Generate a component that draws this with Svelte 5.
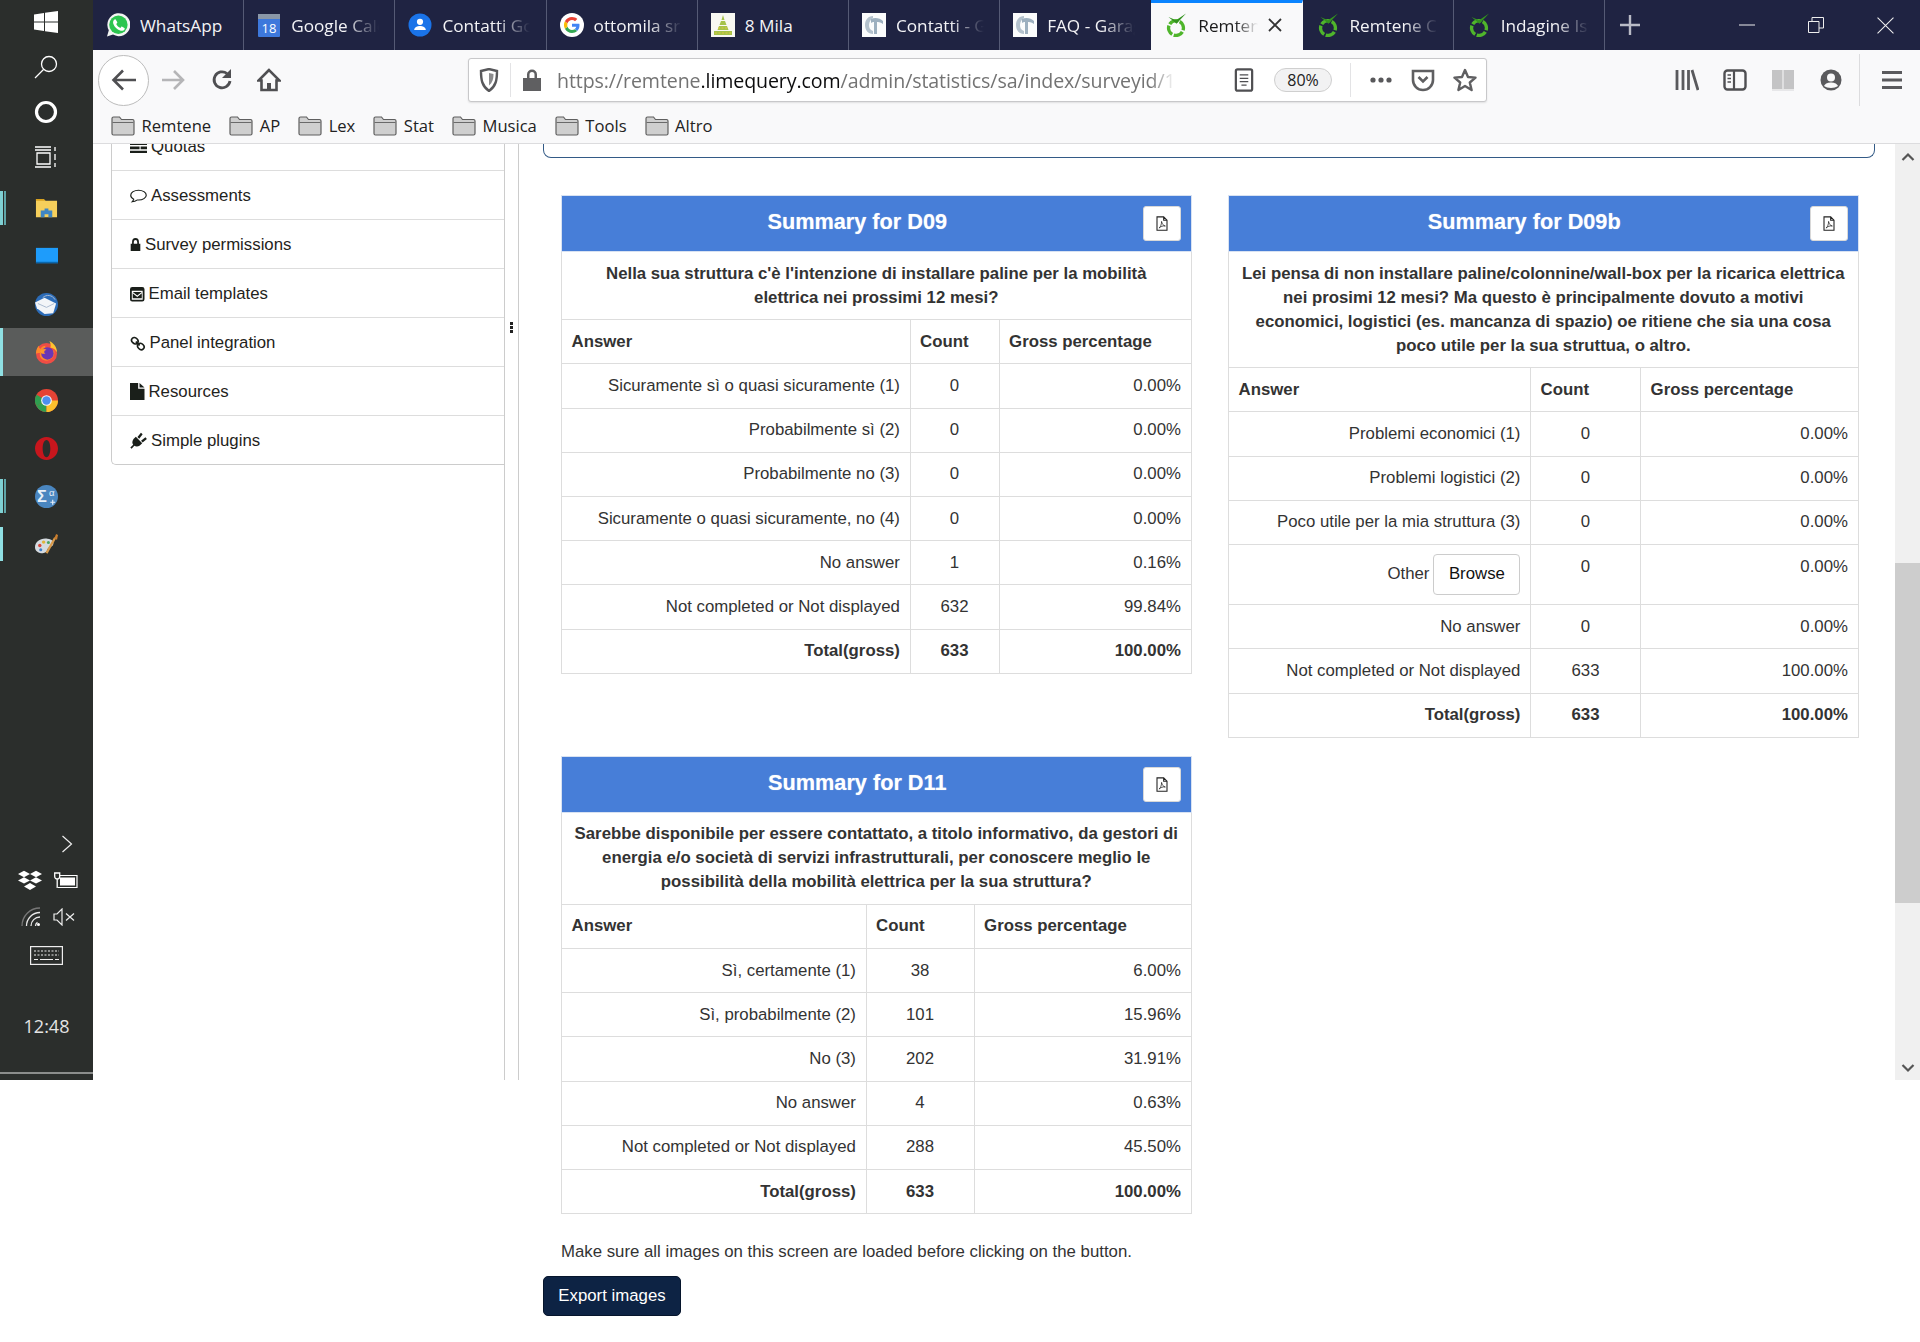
<script>
  const tabs = [
    { icon: 'wa', label: 'WhatsApp', fit: true },
    { icon: 'cal', label: 'Google Calendar' },
    { icon: 'contact', label: 'Contatti Google' },
    { icon: 'g', label: 'ottomila srl - Cerca' },
    { icon: 'mila', label: '8 Mila', fit: true },
    { icon: 'gara', label: 'Contatti - Garage' },
    { icon: 'gara', label: 'FAQ - Garage Italia' },
    { icon: 'lime', label: 'Remtene Statistics', active: true },
    { icon: 'lime', label: 'Remtene Consulting' },
    { icon: 'lime', label: 'Indagine Istat 2020' }
  ];
  const bookmarks = ['Remtene', 'AP', 'Lex', 'Stat', 'Musica', 'Tools', 'Altro'];
  const sideItems = [
    { icon: 'quota', label: 'Quotas' },
    { icon: 'bubble', label: 'Assessments' },
    { icon: 'lock', label: 'Survey permissions' },
    { icon: 'mail', label: 'Email templates' },
    { icon: 'chain', label: 'Panel integration' },
    { icon: 'file', label: 'Resources' },
    { icon: 'plug', label: 'Simple plugins' }
  ];
  const apps = [
    { icon: 'explorer', mark: 'double' },
    { icon: 'desktop' },
    { icon: 'bird' },
    { icon: 'fox', mark: 'active' },
    { icon: 'chrome' },
    { icon: 'opera' },
    { icon: 'sigma', mark: 'double' },
    { icon: 'palette', mark: 'single' }
  ];
  const summaries = [
    {
      title: 'Summary for D09',
      cols: [348.5, 89, 192],
      question: "Nella sua struttura c'è l'intenzione di installare paline per la mobilità elettrica nei prossimi 12 mesi?",
      rows: [
        ['Sicuramente sì o quasi sicuramente (1)', '0', '0.00%'],
        ['Probabilmente sì (2)', '0', '0.00%'],
        ['Probabilmente no (3)', '0', '0.00%'],
        ['Sicuramente o quasi sicuramente, no (4)', '0', '0.00%'],
        ['No answer', '1', '0.16%'],
        ['Not completed or Not displayed', '632', '99.84%']
      ],
      total: ['Total(gross)', '633', '100.00%']
    },
    {
      title: 'Summary for D09b',
      cols: [302, 110, 217.5],
      question: 'Lei pensa di non installare paline/colonnine/wall-box per la ricarica elettrica nei prosimi 12 mesi? Ma questo è principalmente dovuto a motivi economici, logistici (es. mancanza di spazio) oe ritiene che sia una cosa poco utile per la sua struttua, o altro.',
      rows: [
        ['Problemi economici (1)', '0', '0.00%'],
        ['Problemi logistici (2)', '0', '0.00%'],
        ['Poco utile per la mia struttura (3)', '0', '0.00%'],
        ['Other', '0', '0.00%', true],
        ['No answer', '0', '0.00%'],
        ['Not completed or Not displayed', '633', '100.00%']
      ],
      total: ['Total(gross)', '633', '100.00%']
    },
    {
      title: 'Summary for D11',
      cols: [304.5, 108, 217],
      question: 'Sarebbe disponibile per essere contattato, a titolo informativo, da gestori di energia e/o società di servizi infrastrutturali, per conoscere meglio le possibilità della mobilità elettrica per la sua struttura?',
      rows: [
        ['Sì, certamente (1)', '38', '6.00%'],
        ['Sì, probabilmente (2)', '101', '15.96%'],
        ['No (3)', '202', '31.91%'],
        ['No answer', '4', '0.63%'],
        ['Not completed or Not displayed', '288', '45.50%']
      ],
      total: ['Total(gross)', '633', '100.00%']
    }
  ];
</script>

{#snippet tabIcon(kind)}
  <svg class="tabicon" viewBox="0 0 24 24">
    {#if kind === 'wa'}
      <path d="M1 23.5l1.8-6.2A11.5 11.5 0 1 1 7 21.6z" fill="#f2f5f2"/>
      <circle cx="12.4" cy="11.8" r="9.2" fill="#2cc54f"/>
      <path d="M8.6 6.4c-1.4 1-1.9 2.6-1.2 4.6 1.1 3 3.7 5.6 6.7 6.6 2 .6 3.6 0 4.5-1.4.3-.5.2-1-.2-1.3l-2.2-1.2c-.4-.2-.8-.1-1 .2l-.8 1c-1.700-.6-3.400-2.200-4.200-4l.9-.9c.3-.3.3-.7.100-1L9.800 6.700c-.3-.5-.8-.6-1.200-.3z" fill="#fff"/>
    {:else if kind === 'cal'}
      <rect x="1" y="1" width="22" height="23" rx="1" fill="#3d78dc"/>
      <rect x="1" y="1" width="22" height="5" fill="#8a97a8"/>
      <text x="12" y="20" text-anchor="middle" class="caltext">18</text>
    {:else if kind === 'contact'}
      <circle cx="12" cy="12" r="11.500" fill="#1a73e8"/>
      <circle cx="12" cy="8.800" r="3.100" fill="#fff"/>
      <path d="M6.200 17c0-2.800 3.200-4 5.800-4s5.800 1.200 5.800 4z" fill="#fff"/>
    {:else if kind === 'g'}
      <circle cx="12" cy="12" r="12" fill="#fff"/>
      <path d="M19.500 12.300c0-.6 0-1.100-.2-1.600H12v3h4.300c-.2 1-.8 1.800-1.600 2.400l2.500 1.900c1.500-1.300 2.300-3.300 2.300-5.700z" fill="#4285f4"/>
      <path d="M12 20c2.100 0 3.900-.7 5.200-1.900l-2.500-1.900c-.7.5-1.600.8-2.700.8-2.100 0-3.800-1.400-4.500-3.300l-2.600 2C6.200 18.300 8.900 20 12 20z" fill="#34a853"/>
      <path d="M7.500 13.700c-.3-1-.3-2.400 0-3.400l-2.600-2a8 8 0 0 0 0 7.400z" fill="#fbbc05"/>
      <path d="M12 7c1.200 0 2.200.4 3 1.200l2.300-2.300C15.900 4.700 14.100 4 12 4 8.900 4 6.200 5.800 4.900 8.300l2.600 2C8.200 8.400 9.900 7 12 7z" fill="#ea4335"/>
    {:else if kind === 'mila'}
      <rect width="24" height="24" fill="#f8f8f2"/>
      <path d="M12 2l1.500 5h-3zM10 8h4l1.500 4h-7zM8 13h8l1.500 4h-11zM3 18h18v4H3z" fill="#a5c24a"/>
      <path d="M4 20h16M7 15h10" stroke="#e0c93f" stroke-dasharray="2 1.500"/>
    {:else if kind === 'gara'}
      <rect width="24" height="24" fill="#fbfcfc"/>
      <path d="M11 3C6 3 3 7 3 12s3 9 8 9V18c-3-1-4-3-4-6s2-6 4-7z" fill="#b4c2cd"/>
      <path d="M9 6c4-2 9-1 12 2v3c-3-2-5-2-6-2v12h-3V9c-1 0-2 0-3 1z" fill="#9db0bf"/>
    {:else}
      <circle cx="12" cy="15" r="7.400" fill="none" stroke="#4fb52b" stroke-width="3.400" stroke-dasharray="9.900 1.730" transform="rotate(-60 12 15)"/>
      <path d="M4.500 4L12 7.200 22 .5 12.500 10.800z" fill="#33931f"/>
    {/if}
  </svg>
{/snippet}

{#snippet appIcon(kind)}
  <svg class="appicon" viewBox="0 0 24 24">
    {#if kind === 'explorer'}
      <path d="M1 2h8l2 2h12v17H1z" fill="#f6cf5b"/>
      <path d="M1 2h8l2 2H1z" fill="#d9a21f"/>
      <path d="M6 21v-7h4v-2h4v2h4v7h-4v-3h-4v3z" fill="#3f86c4"/>
    {:else if kind === 'desktop'}
      <rect x="1" y="3" width="23" height="16" fill="#1e9cfb"/>
      <rect x="1" y="17.500" width="23" height="1.500" fill="#0a67ad"/>
    {:else if kind === 'bird'}
      <circle cx="12" cy="12" r="12" fill="#2c6cb8"/>
      <path d="M0 10l10-5 12 6-3 10-9 1-8-6z" fill="#f3f5f8"/>
      <path d="M3 11l9 4 8-4M8 5c4-4 10-3 13 2" stroke="#a8b9cf" fill="none"/>
    {:else if kind === 'fox'}
      <circle cx="12" cy="13" r="11" fill="#ef4d45"/>
      <path d="M1 13c0-4 2-7 3-8 0 2 1 3 2 3 1-2 3-3 5-3-1 2 0 3 2 4-4-1-8 1-8 5 0 5 5 7 9 6 4-1 7-5 6-10z" fill="#ff8a2a"/>
      <path d="M15 0c4 2 8 6 8 12-2-4-5-5-7-5 1-2 0-5-1-7z" fill="#ffc22f"/>
      <circle cx="13" cy="13" r="6.500" fill="#6b37b5"/>
      <path d="M5 11c2-3 5-3 7-2-3 1-3 3-1 4-3 1-5 0-6-2z" fill="#ff9a2c"/>
    {:else if kind === 'chrome'}
      <circle cx="12" cy="12" r="12" fill="#e44335"/>
      <path d="M12 12L1.600 18A12 12 0 0 1 1.600 6z" fill="#2f9e4f"/>
      <path d="M12 12L1.600 18A12 12 0 0 0 12 24z" fill="#2f9e4f"/>
      <path d="M12 12h12a12 12 0 0 1-12 12z" fill="#fbc02d"/>
      <circle cx="12" cy="12" r="5.600" fill="#f5f5f5"/>
      <circle cx="12" cy="12" r="4.400" fill="#4d8ff0"/>
    {:else if kind === 'opera'}
      <path fill-rule="evenodd" d="M12 0c6.600 0 12 5.400 12 12s-5.400 12-12 12S0 18.600 0 12 5.400 0 12 0zm0 3c-2.500 0-4 4-4 9s1.500 9 4 9 4-4 4-9-1.500-9-4-9z" fill="#c7161d"/>
    {:else if kind === 'sigma'}
      <circle cx="12" cy="12" r="12" fill="#4a86c0"/>
      <text x="2" y="18" class="sigma">Σ</text>
      <text x="14.500" y="11" class="alpha">α</text>
      <path d="M16 18h5M18.500 15.500v5" stroke="#e8f0f8" stroke-width="1.200"/>
    {:else}
      <path d="M0 15c0-6 6-10 13-9 5 .7 7 3 6 6-1 3-5 2-6 5-.6 2-2 4-5 4-4 0-8-2-8-6z" fill="#d5dbe0"/>
      <circle cx="5" cy="13" r="1.800" fill="#d8473b"/>
      <circle cx="9" cy="9.500" r="1.800" fill="#e0b33a"/>
      <circle cx="14" cy="10" r="1.600" fill="#4aa564"/>
      <circle cx="6" cy="17.500" r="1.600" fill="#3d7fc9"/>
      <path d="M12 21L21 5" stroke="#d89a4a" stroke-width="2.400"/>
      <path d="M20 6l2-5 2 1-1 5z" fill="#c97d2e"/>
    {/if}
  </svg>
{/snippet}

{#snippet sideIcon(kind)}
  <svg class="sideicon sideicon-{kind}" viewBox="0 0 16 16" preserveAspectRatio="none">
    {#if kind === 'quota'}
      <path d="M0 4h16v2.500H0zM0 8h9v2.500H0zM10 8h6v2.500h-6zM0 12h16v2H0z" fill="#1a1f1a"/>
    {:else if kind === 'bubble'}
      <path d="M8 1.500c4 0 7.300 2.500 7.300 5.500S12 12.500 8 12.500H7c-1.500 1.200-3 2-5 2.200.7-.8 1.300-1.800 1.500-3.100C1.700 10.600.7 9 .7 7 .7 4 4 1.500 8 1.500z" fill="none" stroke="#1a1f1a" stroke-width="1.100"/>
    {:else if kind === 'lock'}
      <path d="M3 7V5a5 5 0 0 1 10 0v2h2v9H1V7zm2.500 0h5V5a2.500 2.500 0 0 0-5 0z" fill="#1a1f1a"/>
    {:else if kind === 'mail'}
      <path fill-rule="evenodd" d="M2.500 0h11A2.500 2.500 0 0 1 16 2.500v11a2.500 2.500 0 0 1-2.500 2.500h-11A2.500 2.500 0 0 1 0 13.500v-11A2.500 2.500 0 0 1 2.500 0zM2 4v10h12V4zM3 5.500h10L8 9.500zM3 7l5 4 5-4v5.500H3z" fill="#1a1f1a"/>
    {:else if kind === 'chain'}
      <g fill="none" stroke="#1a1f1a" stroke-width="1.700">
        <ellipse cx="5" cy="5" rx="3.600" ry="3" transform="rotate(45 5 5)"/>
        <ellipse cx="11.200" cy="11.200" rx="3.600" ry="3" transform="rotate(45 11.200 11.200)"/>
        <path d="M6 6l4 4"/>
      </g>
    {:else if kind === 'file'}
      <path d="M0 0h9v5.500h7V16H0zM10.500 0L16 4.200h-5.500z" fill="#1a1f1a"/>
    {:else}
      <path d="M5.500 4.500l6 6-2.200 2.200c-2 1.500-4 1.200-5.200.3L1.500 15.800.3 14.600 3 12c-1-1.300-1.200-3 .3-5.300z" fill="#1a1f1a"/>
      <path d="M7 4.800L10.300.6l1.600 1.500-3.200 4.200zM10.400 8.200l4.100-3.200 1.400 1.600-4 3.200z" fill="#1a1f1a"/>
    {/if}
  </svg>
{/snippet}

{#snippet folder()}
  <svg class="folder" viewBox="0 0 24 20">
    <path d="M1 2.500A1.500 1.500 0 0 1 2.500 1h6l2 2.500h11A1.500 1.500 0 0 1 23 5v12.500a1.500 1.500 0 0 1-1.500 1.500h-19A1.500 1.500 0 0 1 1 17.500z" fill="#cfcfcf" stroke="#5f5f5f" stroke-width="1.200"/>
    <path d="M1.500 6.500h21" stroke="#6a6a6a" stroke-width="1"/>
  </svg>
{/snippet}

<div class="page">
  <aside class="taskbar">
    <div class="sys first">
      <svg class="sysicon" viewBox="0 0 24 24"><path d="M0 4.500l10-1.500v8.500H0zM11 2.800L24 1v10.500H11zM0 12.500h10V21L0 19.500zM11 12.500h13V23l-13-1.800z" fill="#fff"/></svg>
    </div>
    <div class="sys">
      <svg class="sysicon" viewBox="0 0 24 24"><circle cx="15" cy="9" r="7.500" fill="none" stroke="#fff" stroke-width="1.300"/><path d="M9.500 14.500L1 23" stroke="#fff" stroke-width="1.300"/></svg>
    </div>
    <div class="sys">
      <svg class="sysicon" viewBox="0 0 24 24"><circle cx="12" cy="12" r="9.500" fill="none" stroke="#fff" stroke-width="3.200"/></svg>
    </div>
    <div class="sys">
      <svg class="sysicon" viewBox="0 0 24 24"><path d="M1 2h16M1 5h16M3 8h13v11H3zM1 22h16M21 2v4M21 9v6M21 18v4" stroke="#fff" stroke-width="1.300" fill="none"/></svg>
    </div>

    <div class="apps">
      {#each apps as app}
        <div class="app" class:running={app.mark === 'active'}>
          {#if app.mark}<span class="mark mark-{app.mark}"></span>{/if}
          {@render appIcon(app.icon)}
        </div>
      {/each}
    </div>

    <div class="tray">
      <div class="trayrow chevron">
        <svg viewBox="0 0 12 18" width="12" height="18"><path d="M1.500 1l9 8-9 8" fill="none" stroke="#eee" stroke-width="1.200"/></svg>
      </div>
      <div class="trayrow">
        <svg viewBox="0 0 24 20" width="24" height="20"><path d="M6 1l6 4-6 4-6-4zM18 1l6 4-6 4-6-4zM6 9l6 4-6 4-6-4zM18 9l6 4-6 4-6-4z" fill="#fff" transform="scale(1 .8)"/><path d="M12 13l6 3.500-6 3.500-6-3.500z" fill="#fff"/></svg>
        <svg viewBox="0 0 24 16" width="24" height="16"><path d="M4 3.500h19v12H4" fill="none" stroke="#fff" stroke-width="1.200"/><rect x="6" y="5.500" width="15" height="8" fill="#fff"/><path d="M.7 1v3.500a2.500 2.500 0 0 0 5 0V1zM3.200 7v9" fill="#2b2e2c" stroke="#fff" stroke-width="1.300"/></svg>
      </div>
      <div class="trayrow row2">
        <svg viewBox="0 0 20 20" width="20" height="20"><path d="M1 19A18 18 0 0 1 19 1" fill="none" stroke="#777" stroke-width="1.300"/><path d="M5.500 19A13.500 13.500 0 0 1 19 5.500M10 19a9 9 0 0 1 9-9M14.500 19a4.500 4.500 0 0 1 2-3.600" fill="none" stroke="#e8e8e8" stroke-width="1.300"/><circle cx="17.500" cy="17.500" r="1.500" fill="#fff"/></svg>
        <svg viewBox="0 0 22 18" width="22" height="18"><path d="M1 6h3l5-5v16l-5-5H1zM13 5.500l8 7M21 5.500l-8 7" fill="none" stroke="#eee" stroke-width="1.200"/></svg>
      </div>
      <div class="trayrow">
        <svg viewBox="0 0 33 19" width="33" height="19"><rect x=".6" y=".6" width="31.800" height="17.800" fill="none" stroke="#eee" stroke-width="1.200"/><path d="M4 5h25M4 9h25" stroke="#eee" stroke-dasharray="2 1.500"/><path d="M4 13.500h4M10 13.500h13M25 13.500h4" stroke="#eee"/></svg>
      </div>
      <div class="clock">12:48</div>
      <div class="trayline"></div>
    </div>
  </aside>

  <div class="browser">
    <header class="tabstrip">
      {#each tabs as tab}
        <div class="tab" class:active={tab.active}>
          {@render tabIcon(tab.icon)}
          <span class="tablabel" class:fit={tab.fit}>{tab.label}</span>
          {#if tab.active}
            <svg class="tabclose" viewBox="0 0 16 16"><path d="M2 2l12 12M14 2L2 14" stroke="#333" stroke-width="1.800"/></svg>
          {/if}
        </div>
      {/each}
      <svg class="newtab" viewBox="0 0 22 22"><path d="M11 1v20M1 11h20" stroke="#b9bbc6" stroke-width="2.400"/></svg>
      <div class="winbtns">
        <svg viewBox="0 0 16 16" width="16" height="16"><path d="M0 8h16" stroke="#eee" stroke-width="1"/></svg>
        <svg viewBox="0 0 16 16" width="16" height="16"><path d="M.5 4.500h10.500v11H.5zM4 4.500V.5h11.500v10.500H11" fill="none" stroke="#eee"/></svg>
        <svg viewBox="0 0 16 16" width="17" height="17"><path d="M.5.500l15 15M15.500.500l-15 15" stroke="#eee"/></svg>
      </div>
    </header>

    <div class="toolbar">
      <button class="back" aria-label="Back">
        <svg viewBox="0 0 26 22" width="26" height="22"><path d="M25 11H3M12 1.500L2.500 11l9.500 9.500" fill="none" stroke="#4f4f52" stroke-width="2.600"/></svg>
      </button>
      <svg class="tool fwd" viewBox="0 0 24 24"><path d="M1 12h20M13 3l9 9-9 9" fill="none" stroke="#b5b5b7" stroke-width="2.600"/></svg>
      <svg class="tool reload" viewBox="0 0 24 24"><path d="M20 13a8 8 0 1 1-3-7.500" fill="none" stroke="#4f4f52" stroke-width="2.800"/><path d="M21 1v9h-9z" fill="#4f4f52"/></svg>
      <svg class="tool home" viewBox="0 0 24 24"><path d="M12 2L1.500 12.500h3V22h15v-9.500h3z" fill="none" stroke="#4f4f52" stroke-width="2.600"/><rect x="10" y="15" width="4" height="7" fill="#4f4f52"/></svg>

      <div class="urlbar">
        <svg class="shield" viewBox="0 0 20 24"><path d="M2 3l8-2 8 2c0 9-1 15-8 20C3 18 2 12 2 3z" fill="none" stroke="#58585b" stroke-width="2.400"/><path d="M10 5l4.500 1c0 5-1 8.500-4.500 11.500z" fill="#8b8b8d"/></svg>
        <span class="urlsep"></span>
        <svg class="lock" viewBox="0 0 20 24"><path d="M1 10h18v13H1zM5 10V6.500a5 5 0 0 1 10 0V10h-2.500V6.500a2.500 2.500 0 0 0-5 0V10z" fill="#5f5f61"/></svg>
        <span class="url">https://remtene<b>.limequery.com</b>/admin/statistics/sa/index/surveyid/1</span>
        <div class="urlactions">
          <svg class="tool" viewBox="0 0 24 28"><rect x="2.500" y="1.500" width="19" height="25" rx="2" fill="none" stroke="#4f4f52" stroke-width="2.600"/><path d="M7 8h10M7 12h10M7 16h10M9 20h6" stroke="#4f4f52" stroke-width="1.500"/></svg>
          <span class="zoompill">80%</span>
          <span class="urlsep tall"></span>
          <svg class="tool" viewBox="0 0 24 24"><circle cx="4" cy="12" r="2.600" fill="#58585b"/><circle cx="12" cy="12" r="2.600" fill="#58585b"/><circle cx="20" cy="12" r="2.600" fill="#58585b"/></svg>
          <svg class="tool" viewBox="0 0 24 24"><path d="M2 3h20v9a10 10 0 0 1-20 0z" fill="none" stroke="#5f5f61" stroke-width="2.600"/><path d="M7.500 9l4.500 4.500L16.500 9" fill="none" stroke="#5f5f61" stroke-width="2.600"/></svg>
          <svg class="tool" viewBox="0 0 24 24"><path d="M12 2l3 7 7.500.6-5.700 4.900 1.800 7.500L12 18l-6.600 4 1.800-7.500L1.500 9.600 9 9z" fill="none" stroke="#5f5f61" stroke-width="2.400" stroke-linejoin="round"/></svg>
        </div>
      </div>

      <svg class="tool lib" viewBox="0 0 24 24"><path d="M2 2v20M8 2v20M13.500 2v20M17 2l6 20" stroke="#5a5a5d" stroke-width="2.800"/></svg>
      <svg class="tool sp" viewBox="0 0 24 24"><rect x="1.500" y="2.500" width="21" height="19" rx="3" fill="none" stroke="#4f4f52" stroke-width="2.400"/><path d="M11 3v18" stroke="#4f4f52" stroke-width="2.200"/><path d="M4.500 7h3.500M4.500 10.500h3.500M4.500 14h3.500" stroke="#4f4f52" stroke-width="1.500"/></svg>
      <svg class="tool sp" viewBox="0 0 24 24"><path d="M1 2h10.500v19H1zM12.500 2H23v19H12.500z" fill="#c4c4c5"/><path d="M1 22h22" stroke="#d6d6d7"/></svg>
      <svg class="tool sp" viewBox="0 0 24 24"><circle cx="12" cy="12" r="10.500" fill="#5a5a5d"/><circle cx="12" cy="9.500" r="4" fill="#f9f9fa"/><path d="M5 18c1.500-3 4.500-3.500 7-3.500s5.500.5 7 3.500c-3.500 2.500-10.500 2.500-14 0z" fill="#f9f9fa"/></svg>
      <span class="toolsep"></span>
      <svg class="tool menu" viewBox="0 0 24 24"><path d="M2 4.500h20M2 12h20M2 19.500h20" stroke="#5a5a5d" stroke-width="2.800"/></svg>
    </div>

    <nav class="bookmarks">
      {#each bookmarks as b}
        <span class="bookmark">{@render folder()}{b}</span>
      {/each}
    </nav>

    <div class="content">
      <div class="sidebar">
        <div class="sidecol">
          <ul class="sidelist">
            {#each sideItems as item}
              <li>{@render sideIcon(item.icon)}{item.label}</li>
            {/each}
          </ul>
        </div>
        <span class="handle"></span>
      </div>

      <main class="main">
        <div class="topbox"></div>
        <div class="grid">
          {#each summaries as s}
            <table class="summary">
              <colgroup>
                {#each s.cols as w}<col style="width:{w}px" />{/each}
              </colgroup>
              <thead>
                <tr>
                  <th colspan="3" class="title">
                    <span class="titletext">{s.title}</span>
                    <button class="pdf" aria-label="Export to PDF">
                      <svg viewBox="0 0 14 18" width="12" height="15"><path d="M1 1h8l4 4v12H1zM9 1v4h4" fill="none" stroke="#222" stroke-width="1.300"/><path d="M3.500 14.500c2-1.500 3-5 3-8 .5 3 2 5 4.500 5.500-3-.5-5.500.5-7.500 2.500z" fill="none" stroke="#222" stroke-width=".9"/></svg>
                    </button>
                  </th>
                </tr>
                <tr><th colspan="3" class="question">{s.question}</th></tr>
                <tr class="heads"><th>Answer</th><th>Count</th><th>Gross percentage</th></tr>
              </thead>
              <tbody>
                {#each s.rows as r}
                  <tr>
                    <td class="ans">
                      {r[0]}{#if r[3]}<button class="browse">Browse</button>{/if}
                    </td>
                    <td class="cnt">{r[1]}</td>
                    <td class="pct">{r[2]}</td>
                  </tr>
                {/each}
                <tr class="total">
                  <td class="ans">{s.total[0]}</td>
                  <td class="cnt">{s.total[1]}</td>
                  <td class="pct">{s.total[2]}</td>
                </tr>
              </tbody>
            </table>
          {/each}
        </div>
        <p class="note">Make sure all images on this screen are loaded before clicking on the button.</p>
        <button class="export">Export images</button>
      </main>

      <div class="scrollbar">
        <svg class="arrow up" viewBox="0 0 14 10"><path d="M1.500 8L7 2.500 12.500 8" fill="none" stroke="#555" stroke-width="2.200"/></svg>
        <div class="thumb"></div>
        <svg class="arrow down" viewBox="0 0 14 10"><path d="M1.500 2L7 7.500 12.500 2" fill="none" stroke="#555" stroke-width="2.200"/></svg>
      </div>
    </div>
  </div>
</div>

<style>
  :global(body) { margin: 0; background: #fff; font-family: "Liberation Sans", Arial, sans-serif; }
  button { font-family: inherit; }
  .page { display: flex; align-items: flex-start; width: 1920px; height: 1342px; overflow: hidden; }

  /* taskbar */
  .taskbar { width: 93px; height: 1080px; background: #2b2e2c; flex: none; display: flex; flex-direction: column; }
  .sys { height: 45px; display: flex; align-items: center; justify-content: center; flex: none; padding-right: 1px; }
  .sys.first { height: 44px; }
  .sysicon { width: 24px; height: 24px; }
  .apps { display: flex; flex-direction: column; margin-top: 5px; }
  .app { height: 48px; display: flex; align-items: center; justify-content: center; position: relative; padding-right: 1px; }
  .app.running { background: #5a5c5b; }
  .appicon { width: 23px; height: 23px; }
  .sigma { font: bold 17px "Liberation Sans", sans-serif; fill: #e8f0f8; }
  .alpha { font: 10px "Liberation Sans", sans-serif; fill: #e8f0f8; }
  .mark { position: absolute; left: 0; top: 7px; height: 34px; }
  .mark-double { width: 3px; background: #7fd0d3; border-right: 1px solid #2b2e2c; box-shadow: 2px 0 0 #5fa5a8; }
  .mark-single { width: 3px; background: #8fe0e3; }
  .mark-active { top: 0; height: 48px; width: 3px; background: #8fe0e3; }
  .tray { margin-top: 258px; display: flex; flex-direction: column; }
  .trayrow { height: 36px; display: flex; align-items: center; justify-content: center; gap: 12px; padding-left: 3px; }
  .trayrow.chevron { justify-content: flex-end; padding-right: 20px; }
  .trayrow.row2 { height: 38px; }
  .trayrow:nth-child(4) { height: 38px; padding-left: 0; }
  .clock { margin-top: 37px; height: 30px; text-align: center; color: #e4e4e4; font: 18px/30px "Open Sans", sans-serif; }
  .trayline { margin-top: 31px; height: 2px; background: #8b8d8c; }

  /* browser */
  .browser { width: 1827px; flex: none; }
  .tabstrip { height: 50px; background: #1f2342; display: flex; align-items: stretch; font: 17.200px "Open Sans", sans-serif; color: #f3f3f6; }
  .tab { width: 151.200px; flex: none; box-sizing: border-box; display: flex; align-items: center; padding-left: 13px; border-right: 1px solid #555a75; }
  .tab:nth-child(7), .tab.active { border-right-color: transparent; }
  .tabicon { width: 24px; height: 24px; flex: none; margin-right: 10px; }
  .caltext { font: 13px "Open Sans", sans-serif; fill: #fff; }
  .tablabel { width: 88px; white-space: nowrap; overflow: hidden; -webkit-mask-image: linear-gradient(90deg, #000 62%, transparent 100%); mask-image: linear-gradient(90deg, #000 62%, transparent 100%); }
  .tablabel.fit { -webkit-mask-image: none; mask-image: none; }
  .tab.active { background: #f9f9fa; color: #1a1a1a; border-top: 3px solid #0a84ff; padding-bottom: 3px; }
  .tab.active .tablabel { width: 60px; }
  .tabclose { width: 16px; height: 16px; margin-left: 9px; }
  .newtab { width: 22px; height: 22px; margin: 14px 0 0 14px; flex: none; }
  .winbtns { margin-left: auto; display: flex; align-items: center; gap: 53px; padding-right: 26px; }

  .toolbar { height: 60px; background: #f9f9fa; display: flex; align-items: center; color: #4f4f52; padding-left: 5px; box-sizing: border-box; }
  .tool { width: 24px; height: 24px; flex: none; }
  .back { width: 51px; height: 51px; border-radius: 50%; border: 1px solid #bcbcbc; background: #fff; display: flex; align-items: center; justify-content: center; padding: 0; flex: none; }
  .fwd { margin-left: 12px; }
  .reload { margin-left: 25px; }
  .home { margin-left: 23px; }
  .urlbar { margin-left: 187px; width: 1019px; height: 44px; box-sizing: border-box; background: #fff; border: 1px solid #c8c8ca; border-radius: 3px; box-shadow: 0 1px 2px rgba(0,0,0,.1); display: flex; align-items: center; flex: none; }
  .shield { width: 20px; height: 24px; margin-left: 10px; flex: none; }
  .urlsep { width: 1px; height: 34px; background: #e3e3e5; margin-left: 11px; flex: none; }
  .lock { width: 20px; height: 24px; margin-left: 11px; flex: none; }
  .url { margin-left: 15px; flex: 1; margin-right: 57px; white-space: nowrap; overflow: hidden; font: 19.600px "Open Sans", sans-serif; color: #737373; letter-spacing: -.1px; -webkit-mask-image: linear-gradient(90deg, #000 96%, transparent 100%); mask-image: linear-gradient(90deg, #000 96%, transparent 100%); }
  .url b { font-weight: 400; color: #0c0c0d; }
  .urlactions { display: flex; align-items: center; gap: 18px; padding-right: 9px; flex: none; }
  .zoompill { width: 58px; height: 24px; box-sizing: border-box; text-align: center; border: 1px solid #cfcfcf; border-radius: 12px; background: #f2f2f3; font: 16px/22px "Open Sans", sans-serif; color: #222; }
  .urlsep.tall { margin-left: 0; }
  .lib { margin-left: 188px; }
  .sp { margin-left: 24px; }
  .toolsep { width: 1px; height: 52px; background: #dcdcde; margin-left: 16px; flex: none; }
  .menu { margin-left: 20px; }

  .bookmarks { height: 34px; box-sizing: border-box; background: #f9f9fa; border-bottom: 1px solid #dcdcde; display: flex; align-items: center; gap: 18px; padding: 0 0 2px 18px; font: 16.600px "Open Sans", sans-serif; color: #222; }
  .bookmark { display: flex; align-items: center; gap: 6.500px; }
  .folder { width: 24px; height: 20px; flex: none; }

  /* page */
  .content { position: relative; display: flex; align-items: flex-start; font-size: 16.800px; line-height: 24px; color: #333; }
  .sidebar { width: 426px; height: 936px; flex: none; box-sizing: border-box; padding-left: 18px; overflow: hidden; position: relative; border-right: 1px solid #ccc; color: #1f2320; }
  .sidecol { display: flow-root; width: 394px; height: 100%; box-sizing: border-box; border-right: 1px solid #ccc; }
  .sidelist { list-style: none; margin: -22px 0 0; padding: 0; box-sizing: border-box; border-left: 1px solid #ccc; border-bottom: 1px solid #ccc; border-radius: 0 0 0 5px; }
  .sidelist li { height: 49px; box-sizing: border-box; padding: 13px 0 0 18px; border-bottom: 1px solid #ddd; display: flex; align-items: flex-start; white-space: nowrap; }
  .sidelist li:last-child { border-bottom: 0; height: 48px; }
  .sideicon { width: 15px; height: 14px; margin: 5px 4px 0 0; flex: none; }
  .sideicon-quota { width: 17px; height: 17px; margin-top: 3px; }
  .sideicon-bubble { width: 17px; height: 14px; }
  .sideicon-plug { width: 17px; height: 17px; margin-top: 3px; }
  .sideicon-lock { width: 11px; height: 13px; }
  .sideicon-mail { width: 14.500px; height: 14.500px; }
  .sideicon-chain { width: 15.500px; height: 15px; }
  .sideicon-file { width: 14.500px; height: 17px; margin-top: 3px; }
  .handle { position: absolute; left: 417px; top: 178px; width: 3px; height: 3px; background: #222; box-shadow: 0 4px 0 #222, 0 8px 0 #222; }

  .main { width: 1401px; flex: none; }
  .topbox { margin-left: 24px; width: 1332px; height: 14px; box-sizing: border-box; border: 1.500px solid #335a86; border-top: 0; border-radius: 0 0 8px 8px; }
  .grid { margin: 37px 0 0 42px; display: grid; grid-template-columns: 630px 630px; column-gap: 37px; row-gap: 18px; align-items: start; }
  .summary { border-collapse: collapse; table-layout: fixed; width: 630px; background: #fff; }
  .summary th, .summary td { border: 1px solid #ddd; padding: 9.600px; font-weight: 400; vertical-align: top; }
  .summary .title { position: relative; height: 56px; box-sizing: border-box; background: #477ed8; padding: 0 38px 0 0; text-align: center; vertical-align: middle; border-color: #d8e2f2; }
  .titletext { font: bold 21.700px/1 "Liberation Sans", Arial, sans-serif; color: #fff; text-shadow: 0 0 1px rgba(255,255,255,.5); }
  .pdf { position: absolute; right: 10px; top: 10px; width: 38px; height: 35px; padding: 0; background: #fff; border: 1px solid #d8d8d8; border-radius: 3px; display: flex; align-items: center; justify-content: center; }
  .summary .question { font-weight: 700; text-align: center; padding: 9.600px 10px; }
  .summary .heads th { font-weight: 700; text-align: left; }
  .ans, .pct { text-align: right; }
  .cnt { text-align: center; }
  .total td { font-weight: 700; }
  .browse { margin-left: 4px; height: 40.500px; width: 87px; padding: 0; background: #fff; border: 1px solid #ccc; border-radius: 4px; font-size: 16.800px; color: #111; vertical-align: middle; margin-top: -.5px; }
  .note { margin: 26px 0 0 42px; }
  .export { display: block; margin: 12px 0 26px 24px; width: 138px; height: 40px; padding: 0; background: #0d2344; border: 1px solid #06152c; border-radius: 5px; color: #fff; font-size: 16.800px; }

  .scrollbar { position: absolute; right: 0; top: 0; width: 25px; height: 936px; background: #f0f0f0; display: flex; flex-direction: column; align-items: center; }
  .arrow { width: 14px; height: 10px; flex: none; }
  .arrow.up { margin-top: 8px; }
  .arrow.down { margin-top: 160px; }
  .thumb { width: 25px; height: 340px; margin-top: 401px; background: #cdcdcd; flex: none; }
</style>
